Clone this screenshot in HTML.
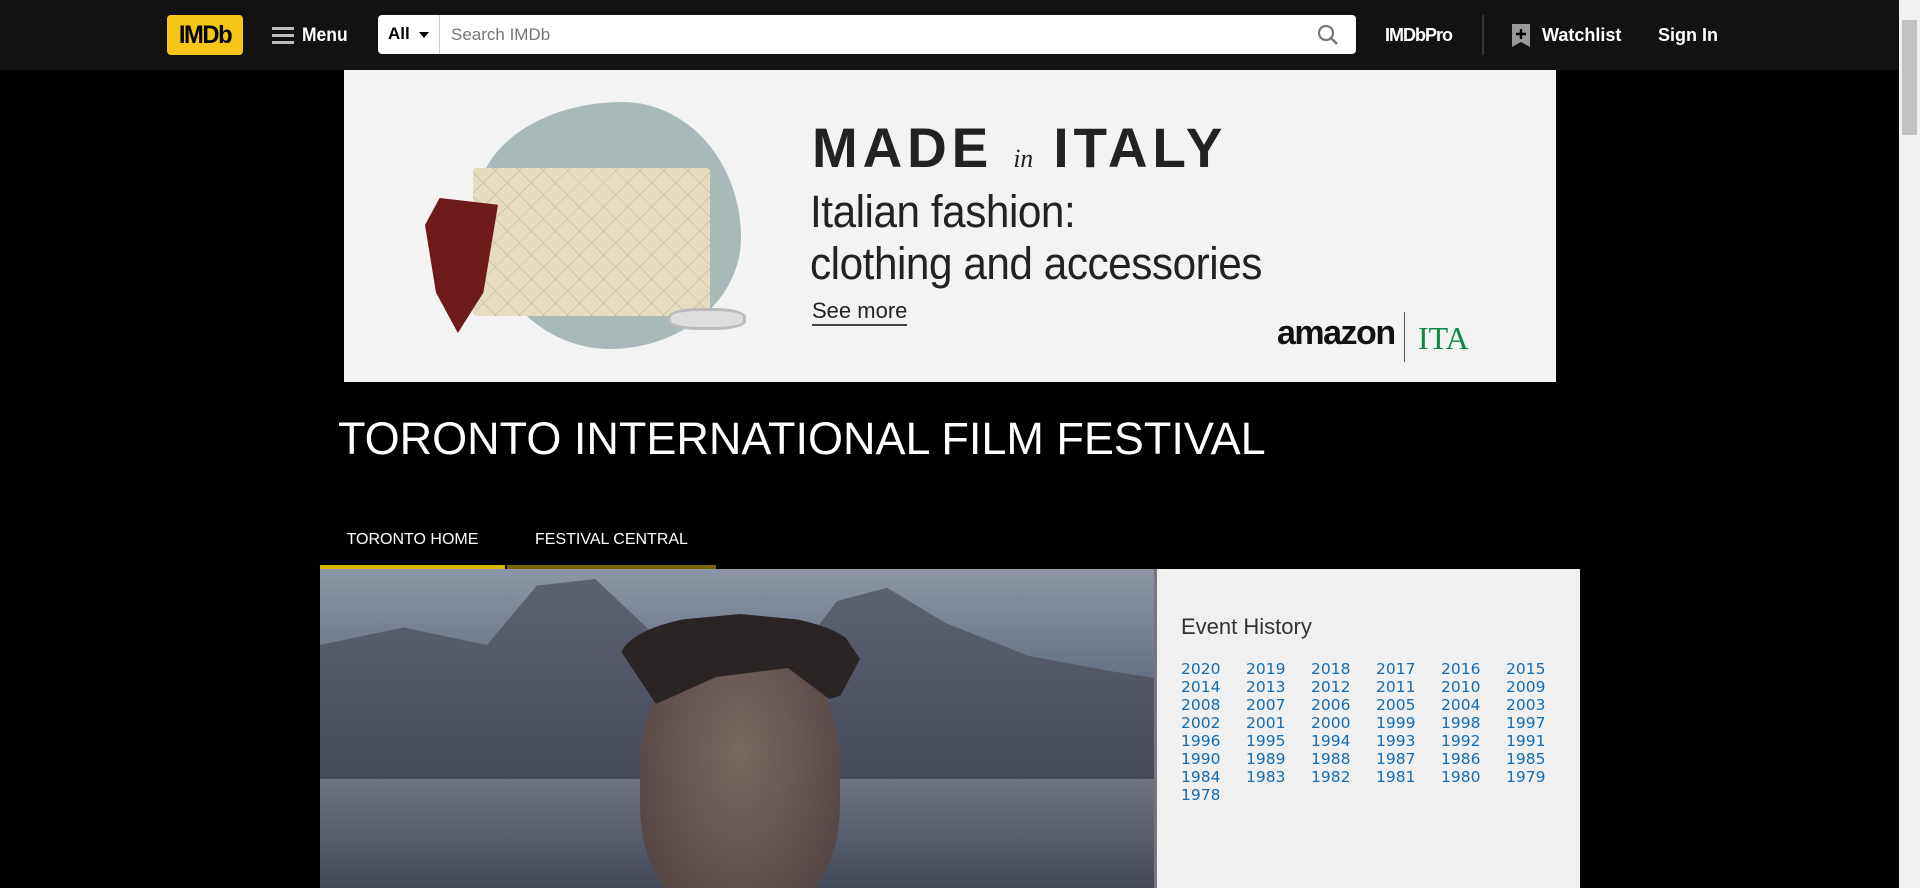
<!DOCTYPE html>
<html><head><meta charset="utf-8">
<style>
*{margin:0;padding:0;box-sizing:border-box}
html,body{width:1920px;height:888px;overflow:hidden;background:#000;font-family:"Liberation Sans",Arial,sans-serif}
.hdr{position:absolute;left:0;top:0;width:1899px;height:70px;background:#121212}
.abs{position:absolute}
.logo{left:165px;top:15px;width:80px;height:40px;background:#f5c518;border-radius:4px;color:#000;font-weight:bold;font-size:25px;letter-spacing:-1.5px;text-align:center;line-height:40px;transform:scaleX(.95)}
.w{color:#fff;font-weight:bold;font-size:18px}
.search{left:378px;top:15px;width:978px;height:39px;background:#fff;border-radius:4px}
.scroll{position:absolute;left:1899px;top:0;width:21px;height:888px;background:#f1f1f1}
.ad{left:344px;top:70px;width:1212px;height:312px;background:#f3f3f3}
.title{left:338px;top:413px;color:#fff;font-size:45px;white-space:nowrap}
.tab{top:520px;height:49px;color:#fff;font-size:16px;line-height:40px;text-align:center}
.years{left:1181px;top:660px;font-family:"DejaVu Sans",Verdana,sans-serif;font-size:15.5px;line-height:18px;color:#136cb2}
.years span{display:inline-block;width:65px}
</style></head><body>
<div class="hdr">
 <div class="abs logo">IMDb</div>
 <div class="abs" style="left:272px;top:27px;width:22px;height:3px;background:#bbb;box-shadow:0 7px 0 #bbb,0 14px 0 #bbb"></div>
 <div class="abs w" style="left:302px;top:25px;font-size:19px;transform:scaleX(.92);transform-origin:left">Menu</div>
 <div class="abs search">
  <div class="abs" style="left:10px;top:9px;font-weight:bold;font-size:17px;color:#000">All</div>
  <div class="abs" style="left:41px;top:17px;border:5px solid transparent;border-top:6px solid #000;border-bottom:0"></div>
  <div class="abs" style="left:61px;top:0;width:1px;height:39px;background:#ccc"></div>
  <div class="abs" style="left:73px;top:10px;font-size:17px;color:#757575">Search IMDb</div>
  <svg class="abs" style="left:938px;top:8px" width="24" height="24" viewBox="0 0 24 24"><circle cx="10" cy="10" r="7" fill="none" stroke="#777" stroke-width="2.2"/><path d="M15 15l6 6" stroke="#777" stroke-width="2.6"/></svg>
 </div>
 <div class="abs w" style="left:1385px;top:25px;font-size:18px;letter-spacing:-1px">IMDbPro</div>
 <div class="abs" style="left:1482px;top:15px;width:2px;height:40px;background:#333"></div>
 <svg class="abs" style="left:1512px;top:24px" width="18" height="23" viewBox="0 0 18 23"><path d="M0 0h18v23l-9-5-9 5z" fill="#999"/><path d="M9 5v10M4 10h10" stroke="#000" stroke-width="2.4"/></svg>
 <div class="abs w" style="left:1542px;top:25px">Watchlist</div>
 <div class="abs w" style="left:1658px;top:25px">Sign In</div>
</div>
<div class="scroll"><div style="position:absolute;left:3px;top:20px;width:15px;height:115px;background:#c1c1c1"></div></div>

<div class="abs ad">
 <div class="abs" style="left:134px;top:32px;width:263px;height:247px;background:#a9b9ba;border-radius:55% 45% 50% 50%/40% 55% 45% 60%"></div>
 <div class="abs" style="left:129px;top:98px;width:237px;height:148px;background:#e6dcc0;border-radius:4px;background-image:repeating-linear-gradient(45deg,transparent 0 16px,#cfc4a5 16px 17px),repeating-linear-gradient(-45deg,transparent 0 16px,#cfc4a5 16px 17px)"></div>
 <div class="abs" style="left:81px;top:128px;width:73px;height:135px;background:#6e1a1a;clip-path:polygon(20% 0,100% 5%,80% 70%,45% 100%,15% 70%,0 20%)"></div>
 <div class="abs" style="left:324px;top:238px;width:78px;height:22px;border:3px solid #bbb;border-radius:40%;background:#ddd"></div>
 <div class="abs" style="left:468px;top:45px;font-size:56px;font-weight:bold;color:#222;letter-spacing:5px;white-space:nowrap;transform:scaleX(.98);transform-origin:left">MADE <i style="font-family:'Liberation Serif';font-size:26px;font-weight:normal;letter-spacing:0">in</i> ITALY</div>
 <div class="abs" style="left:466px;top:116px;font-size:45px;color:#222;line-height:52px;white-space:nowrap;letter-spacing:-.5px;transform:scaleX(.94);transform-origin:left">Italian fashion:<br>clothing and accessories</div>
 <div class="abs" style="left:468px;top:228px;font-size:22px;color:#222;border-bottom:2px solid #444">See more</div>
 <div class="abs" style="left:933px;top:244px;font-size:34px;font-weight:bold;color:#111;letter-spacing:-1.5px">amazon</div>
 <div class="abs" style="left:1060px;top:242px;width:1px;height:50px;background:#555"></div>
 <div class="abs" style="left:1074px;top:250px;font-family:'Liberation Serif';font-size:32px;color:#0a8a4a">ITA</div>
</div>

<div class="abs title">TORONTO INTERNATIONAL FILM FESTIVAL</div>
<div class="abs tab" style="left:320px;width:185px;border-bottom:4px solid #d6b300">TORONTO HOME</div>
<div class="abs tab" style="left:507px;width:209px;border-bottom:4px solid #7a6500">FESTIVAL CENTRAL</div>

<div class="abs" style="left:320px;top:569px;width:834px;height:319px;background:linear-gradient(180deg,#8d96a6 0%,#6b7589 30%,#4a5468 60%,#2c3544 100%);overflow:hidden">
 <div class="abs" style="left:0;top:10px;width:834px;height:220px;background:linear-gradient(180deg,#5d6272,#444a5a);clip-path:polygon(0 30%,10% 22%,20% 30%,26% 3%,33% 0,40% 25%,50% 35%,58% 30%,62% 10%,68% 4%,75% 20%,85% 35%,95% 42%,100% 45%,100% 100%,0 100%)"></div>
 <div class="abs" style="left:0;top:210px;width:834px;height:120px;background:linear-gradient(180deg,#6c7482,#3e4656)"></div>
 <div class="abs" style="left:320px;top:70px;width:200px;height:280px;background:radial-gradient(ellipse at 50% 40%,#7a6862,#4c3f3d);border-radius:45% 45% 40% 40%"></div>
 <div class="abs" style="left:300px;top:45px;width:240px;height:90px;background:#2a2524;border-radius:50% 50% 30% 20%;clip-path:polygon(0 40%,10% 10%,50% 0,90% 10%,100% 50%,90% 100%,70% 60%,40% 70%,15% 100%)"></div>
</div>
<div class="abs" style="left:1154px;top:569px;width:3px;height:319px;background:#777"></div>
<div class="abs" style="left:1157px;top:569px;width:423px;height:319px;background:#f0f0f0"></div>
<div class="abs" style="left:1181px;top:614px;font-size:22px;color:#333">Event History</div>
<div class="abs years">
<span>2020</span><span>2019</span><span>2018</span><span>2017</span><span>2016</span><span>2015</span><br>
<span>2014</span><span>2013</span><span>2012</span><span>2011</span><span>2010</span><span>2009</span><br>
<span>2008</span><span>2007</span><span>2006</span><span>2005</span><span>2004</span><span>2003</span><br>
<span>2002</span><span>2001</span><span>2000</span><span>1999</span><span>1998</span><span>1997</span><br>
<span>1996</span><span>1995</span><span>1994</span><span>1993</span><span>1992</span><span>1991</span><br>
<span>1990</span><span>1989</span><span>1988</span><span>1987</span><span>1986</span><span>1985</span><br>
<span>1984</span><span>1983</span><span>1982</span><span>1981</span><span>1980</span><span>1979</span><br>
<span>1978</span>
</div>
</body></html>
